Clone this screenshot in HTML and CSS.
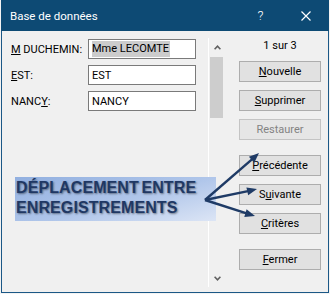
FILE: index.html
```html
<!DOCTYPE html>
<html>
<head>
    <link rel="stylesheet" href="styles.css">
</head>
<body>

<!-- Access style data form window -->
<div class="window">
    <div class="titlebar">
        <span class="title">Base de données</span>
        <div class="controls">
            <span class="ctrl help">?</span>
            <span class="ctrl close">
                <svg width="10" height="10" viewBox="0 0 10 10"><path d="M0.5 0.5 L9.5 9.5 M9.5 0.5 L0.5 9.5" stroke="#fff" stroke-width="1.2" fill="none"/></svg>
            </span>
        </div>
    </div>

    <div class="content">
        <div class="fields">
            <label class="lbl"><u>M</u> DUCHEMIN:</label>
            <div class="field"><span class="sel">Mme LECOMTE</span></div>

            <label class="lbl"><u>E</u>ST:</label>
            <div class="field">EST</div>

            <label class="lbl">NANC<u>Y</u>:</label>
            <div class="field">NANCY</div>
        </div>

        <div class="scrollbar">
            <div class="arrow">
                <svg width="7" height="5" viewBox="0 0 7 5"><path d="M0.6 4.2 L3.5 1.2 L6.4 4.2" stroke="#606060" stroke-width="1.6" fill="none"/></svg>
            </div>
            <div class="thumb"></div>
            <div class="track"></div>
            <div class="arrow down">
                <svg width="7" height="5" viewBox="0 0 7 5"><path d="M0.6 0.8 L3.5 3.8 L6.4 0.8" stroke="#606060" stroke-width="1.6" fill="none"/></svg>
            </div>
        </div>

        <div class="buttons">
            <div class="counter">1 sur 3</div>
            <button class="btn"><u>N</u>ouvelle</button>
            <button class="btn"><u>S</u>upprimer</button>
            <button class="btn" disabled>Restaurer</button>
            <button class="btn group"><u>P</u>récédente</button>
            <button class="btn">S<u>u</u>ivante</button>
            <button class="btn"><u>C</u>ritères</button>
            <button class="btn group"><u>F</u>ermer</button>
        </div>
    </div>
</div>

<!-- annotation drawn over the window -->
<div class="callout">DÉPLACEMENT ENTRE<br>ENREGISTREMENTS</div>
<svg class="arrows" width="330" height="294" viewBox="0 0 330 294">
    <g stroke="#1f3b66" stroke-width="2.4" fill="none">
        <line x1="205" y1="200" x2="253.1" y2="158.4"/>
        <line x1="205" y1="200" x2="249.2" y2="190.8"/>
        <line x1="205" y1="200" x2="247.4" y2="213.7"/>
    </g>
    <g fill="#1f3b66">
        <polygon points="259,153 254.3,162.7 248.9,156.8"/>
        <polygon points="257,189 248.2,195.2 246.4,187.4"/>
        <polygon points="255,216 244.3,216.9 246.6,209.2"/>
    </g>
</svg>

</body>
</html>
```
FILE: styles.css
```css
body {
    margin: 0;
    background-color: #f3f3f3;
    font-family: Roboto, "Liberation Sans", sans-serif;
    font-size: 11px;
    color: #000;
    position: relative;
    width: 330px;
    height: 294px;
    overflow: hidden;
}

.window {
    box-sizing: border-box;
    width: 328px;
    height: 293px;
    margin-left: 1px;
    border: 1px solid #1b5886;
    border-top: none;
    background-color: #f0f0f0;
    display: flex;
    flex-direction: column;
}

.titlebar {
    height: 31px;
    background-color: #0d4a74;
    color: #fff;
    display: flex;
    align-items: center;
    padding-left: 9px;
    margin: 0 -1px;
    padding-right: 1px;
}

.title {
    font-size: 11.5px;
    margin-top: 1px;
}

.controls {
    margin-left: auto;
    display: flex;
    height: 100%;
}

.ctrl {
    width: 45px;
    display: flex;
    align-items: center;
    justify-content: center;
}

.help {
    font-size: 13px;
    font-weight: 300;
    margin-top: -1px;
}

.content {
    flex: 1;
    display: flex;
}

.fields {
    width: 197px;
    padding: 8px 0 0 9px;
    display: grid;
    grid-template-columns: 77px 108px;
    grid-auto-rows: 20px;
    row-gap: 6px;
    align-content: start;
    align-items: center;
}

.lbl {
    white-space: nowrap;
}

.field {
    box-sizing: border-box;
    height: 20px;
    border: 1px solid #7a7a7a;
    background-color: #fff;
    padding-left: 3px;
    display: flex;
    align-items: center;
}

.sel {
    background-color: #cccccc;
    line-height: 16px;
    padding-right: 1px;
}

/* vertical scroll bar of the record list */
.scrollbar {
    width: 16px;
    margin: 7px 0 5px 0;
    border-left: 1px solid #fff;
    display: flex;
    flex-direction: column;
    align-items: center;
}

.arrow {
    height: 19px;
    width: 100%;
    display: flex;
    align-items: center;
    justify-content: center;
}

.arrow.down {
    height: 18px;
}

.thumb {
    width: 13px;
    height: 61px;
    background-color: #cdcdcd;
    margin-left: -2px;
}

.track {
    flex: 1;
}

.buttons {
    padding: 7px 0 0 14px;
    display: flex;
    flex-direction: column;
    align-items: flex-start;
}

.counter {
    width: 82px;
    text-align: center;
    line-height: 16px;
    margin-bottom: 7px;
}

.btn {
    box-sizing: border-box;
    width: 82px;
    height: 21px;
    margin: 0 0 8px 0;
    padding: 0;
    border: 1px solid #adadad;
    background-color: #e1e1e1;
    font-family: Roboto, "Liberation Sans", sans-serif;
    font-size: 11px;
    color: #000;
}

.btn.group {
    margin-top: 7px;
}

.btn:disabled {
    border-color: #c4c4c4;
    background-color: #e6e6e6;
    color: #838383;
}

.callout {
    position: absolute;
    left: 15px;
    top: 177px;
    box-sizing: border-box;
    width: 201px;
    height: 44px;
    padding: 1px 0 0 1px;
    background: linear-gradient(165deg, #92b0e0 0%, #b0c6ea 55%, #dce5f5 100%);
    font-family: "Liberation Sans", Arial, sans-serif;
    font-weight: bold;
    font-size: 16px;
    line-height: 20px;
    letter-spacing: 0.1px;
    word-spacing: -2px;
    color: #1f3864;
    text-shadow: 1px 1px 2px rgba(0, 0, 0, 0.45);
    white-space: nowrap;
}

.arrows {
    position: absolute;
    left: 0;
    top: 0;
}
```
